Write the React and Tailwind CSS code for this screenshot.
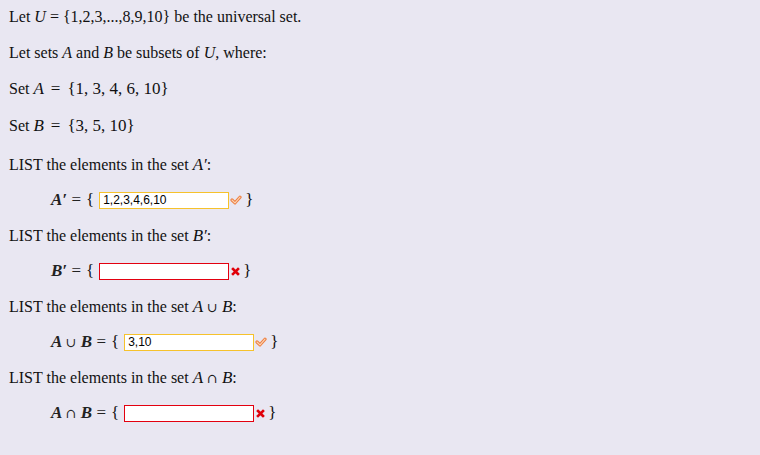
import React from "react";

const serif = { fontFamily: '"Liberation Serif", "DejaVu Serif", serif' };

const Check = () => (
  <svg width="12" height="10" viewBox="0 0 12 10" className="ml-[1px]">
    <path d="M2 5 L5 7.8 L10 2.2" fill="none" stroke="#ee7f3f" strokeWidth="3.2" strokeLinecap="round" strokeLinejoin="round" />
    <path d="M2 5 L5 7.8 L10 2.2" fill="none" stroke="#fbd3b6" strokeWidth="1.1" strokeLinecap="round" strokeLinejoin="round" />
  </svg>
);

const Cross = () => (
  <svg width="9" height="9" viewBox="0 0 9 9" className="ml-[2px]">
    <path d="M2 2 L7 7 M7 2 L2 7" fill="none" stroke="#e0000a" strokeWidth="2.6" strokeLinecap="square" />
  </svg>
);

const Row = ({ label, value, ok, mt }) => (
  <div className={`flex items-center h-[20px] pl-[42px] ${mt}`}>
    <span className="text-[17px] italic font-semibold text-[#222]">{label}</span>
    <span className="ml-[5px] text-[17px]">{"{"}</span>
    <div
      className={`ml-[5px] w-[130px] h-[17px] bg-white border px-[3px] text-[12px] leading-[15px] text-black ${
        ok ? "border-[#f6c22c]" : "border-[#e3000f]"
      }`}
      style={{ fontFamily: '"Liberation Sans", Arial, sans-serif' }}
    >
      {value}
    </div>
    {ok ? <Check /> : <Cross />}
    <span className="ml-[3px] text-[17px]">{"}"}</span>
  </div>
);

const App = () => {
  return (
    <div className="w-[760px] h-[455px] bg-[#e9e7f2] text-[16px] text-[#111] pl-[9px] pt-[7px]" style={serif}>
      <div className="flex flex-col">
        <div className="h-[20px] leading-[20px]">
          Let <i>U</i> = {"{"}1,2,3,...,8,9,10{"}"} be the universal set.
        </div>
        <div className="h-[20px] leading-[20px] mt-[16px]">
          Let sets <i>A</i> and <i>B</i> be subsets of <i>U</i>, where:
        </div>
        <div className="h-[20px] leading-[20px] mt-[16px]">
          Set <i className="text-[17px]">A</i> <span className="text-[17px] mx-[3px]">=</span>{" "}
          <span className="text-[17px]">{"{"}1, 3, 4, 6, 10{"}"}</span>
        </div>
        <div className="h-[20px] leading-[20px] mt-[17px]">
          Set <i className="text-[17px]">B</i> <span className="text-[17px] mx-[3px]">=</span>{" "}
          <span className="text-[17px]">{"{"}3, 5, 10{"}"}</span>
        </div>
        <div className="h-[20px] leading-[20px] mt-[19px]">
          LIST the elements in the set <i className="text-[17px]">A</i>
          <span className="text-[17px] italic">′</span>:
        </div>
        <Row label={<>A′ <span className="not-italic font-normal">=</span></>} value="1,2,3,4,6,10" ok mt="mt-[15px]" />
        <div className="h-[20px] leading-[20px] mt-[16px]">
          LIST the elements in the set <i className="text-[17px]">B</i>
          <span className="text-[17px] italic">′</span>:
        </div>
        <Row label={<>B′ <span className="not-italic font-normal">=</span></>} value="" ok={false} mt="mt-[15px]" />
        <div className="h-[20px] leading-[20px] mt-[16px]">
          LIST the elements in the set <i className="text-[17px]">A</i>{" "}
          <span style={{ fontFamily: '"DejaVu Serif", serif' }} className="text-[13px]">∪</span>{" "}
          <i className="text-[17px]">B</i>:
        </div>
        <Row
          label={
            <>
              A <span className="not-italic font-normal text-[13px]" style={{ fontFamily: '"DejaVu Serif", serif' }}>∪</span> B{" "}
              <span className="not-italic font-normal">=</span>
            </>
          }
          value="3,10"
          ok
          mt="mt-[15px]"
        />
        <div className="h-[20px] leading-[20px] mt-[16px]">
          LIST the elements in the set <i className="text-[17px]">A</i>{" "}
          <span style={{ fontFamily: '"DejaVu Serif", serif' }} className="text-[13px]">∩</span>{" "}
          <i className="text-[17px]">B</i>:
        </div>
        <Row
          label={
            <>
              A <span className="not-italic font-normal text-[13px]" style={{ fontFamily: '"DejaVu Serif", serif' }}>∩</span> B{" "}
              <span className="not-italic font-normal">=</span>
            </>
          }
          value=""
          ok={false}
          mt="mt-[15px]"
        />
      </div>
    </div>
  );
};

export default App;
